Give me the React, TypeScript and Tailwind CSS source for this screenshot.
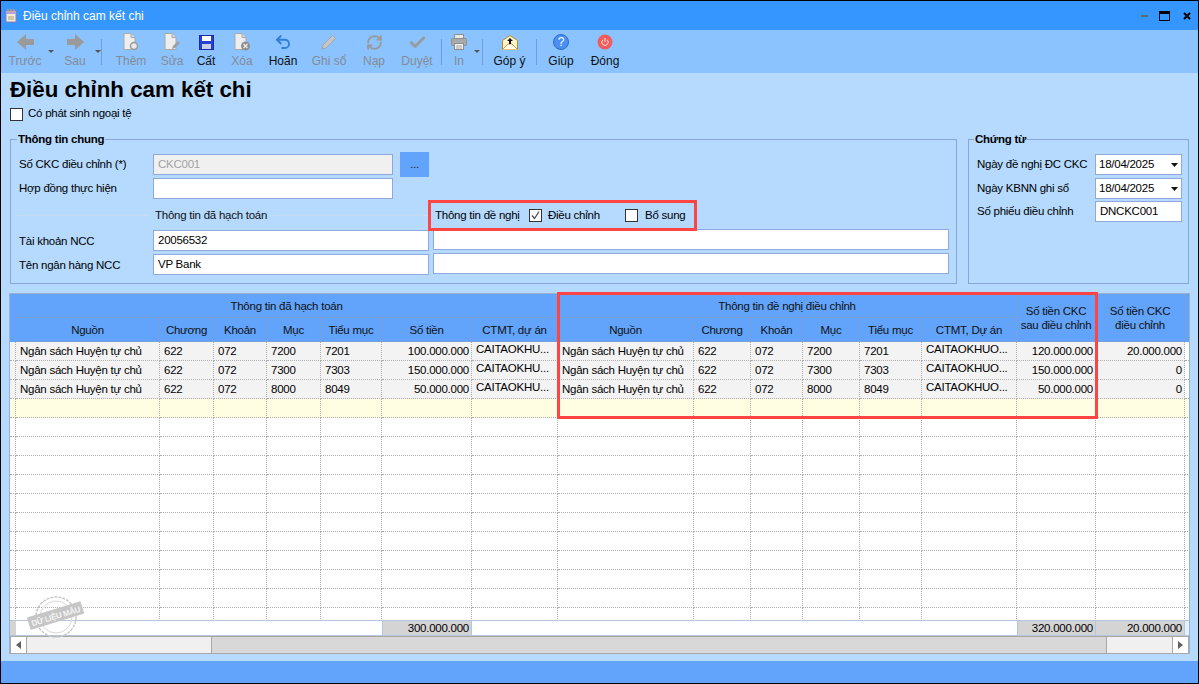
import type { ReactNode } from "react";
import { Undo2, RefreshCw, Check } from "lucide-react";

const gridCols =
  "grid grid-cols-[6px_144px_54px_53px_54px_61px_90px_86px_136px_57px_52px_57px_62px_95px_79px_89px_4px]";

const dataRows = [
  ["7200", "7201", "100.000.000", "120.000.000", "20.000.000"],
  ["7300", "7303", "150.000.000", "150.000.000", "0"],
  ["8000", "8049", "50.000.000", "50.000.000", "0"],
];

const emptyCols = Array.from({ length: 17 }, (_, i) => i);
const emptyRows = Array.from({ length: 11 }, (_, i) => i);

function ArrowIcon({ right }: { right?: boolean }) {
  return (
    <svg width="17" height="16" viewBox="0 0 17 16">
      <path
        d={right ? "M0 5h8V0l9 8-9 8v-5H0z" : "M17 5H9V0L0 8l9 8v-5h8z"}
        fill="#9a9a9a"
      />
    </svg>
  );
}

function DocIcon({ badge }: { badge: "add" | "edit" | "del" }) {
  return (
    <svg width="16" height="18" viewBox="0 0 16 18">
      <path d="M1 .5h7l4 4v12H1z" fill="#eeeeee" stroke="#a8a8a8" />
      <path d="M8 .5v4h4" fill="#d8d8d8" stroke="#a8a8a8" />
      {badge === "add" && (
        <circle cx="11" cy="13" r="3.5" fill="#e8e8e8" stroke="#9a9a9a" strokeWidth="1.5" />
      )}
      {badge === "edit" && <path d="M8 16l1-3 5-5 2 2-5 5z" fill="#9f9f9f" />}
      {badge === "del" && (
        <>
          <circle cx="11.500" cy="13" r="4.500" fill="#8f8f8f" />
          <path d="M9.500 11l4 4m0-4l-4 4" stroke="#eeeeee" strokeWidth="1.200" />
        </>
      )}
    </svg>
  );
}

function SaveIcon() {
  return (
    <svg width="15" height="15" viewBox="0 0 15 15">
      <rect x="0.500" y="0.500" width="14" height="14" fill="#2a3fd0" stroke="#1a2aa8" />
      <rect x="3" y="1" width="9" height="5" fill="#ffffff" />
      <rect x="3" y="9" width="9" height="5" fill="#c8d0e8" />
    </svg>
  );
}

function PencilIcon() {
  return (
    <svg width="16" height="16" viewBox="0 0 16 16">
      <path d="M1 15l1-4L11.500 1.500l3 3L5 14z" fill="#c6c6c6" stroke="#a5a5a5" />
    </svg>
  );
}

function PrinterIcon() {
  return (
    <svg width="16" height="16" viewBox="0 0 16 16">
      <rect x="3.500" y="0.500" width="9" height="4" fill="#e8e8e8" stroke="#8f8f8f" />
      <rect x="0.500" y="4.500" width="15" height="7" rx="1" fill="#a9a9a9" stroke="#8f8f8f" />
      <rect x="3.500" y="9.500" width="9" height="6" fill="#efefef" stroke="#8f8f8f" />
      <path d="M5 12h6M5 14h6" stroke="#a9a9a9" />
    </svg>
  );
}

function MailIcon() {
  return (
    <svg width="16" height="15" viewBox="0 0 16 15">
      <path d="M.5 5.500L8 .5l7.500 5v9H.5z" fill="#fff6d0" stroke="#c08a20" />
      <path d="M.5 14.500L6 9h4l5.500 5.500" fill="#fffdf2" stroke="#d0a040" />
      <path d="M8 3l3 3H9v3H7V6H5z" fill="#111111" />
    </svg>
  );
}

function HelpIcon() {
  return (
    <div className="w-4 h-4 rounded-full bg-[#4a90f0] border border-[#2f6cc8] flex items-center justify-center text-white text-[12px] leading-none">
      ?
    </div>
  );
}

function PowerIcon() {
  return (
    <svg width="16" height="16" viewBox="0 0 16 16">
      <circle cx="8" cy="8" r="7.500" fill="#f25c5c" />
      <path d="M5.800 5.800a3.200 3.200 0 1 0 4.400 0M8 4v4" fill="none" stroke="#ffe4e4" strokeWidth="1" />
    </svg>
  );
}

function Caret() {
  return (
    <svg width="6" height="3" viewBox="0 0 6 3" className="mt-[20px] shrink-0">
      <path d="M0 0h6L3 3z" fill="#555555" />
    </svg>
  );
}

function ToolSep() {
  return <div className="w-[1px] h-[26px] mt-[9px] bg-[#6f9ed6] shrink-0" />;
}

function ToolItem({
  label,
  width,
  active,
  children,
}: {
  label: string;
  width: string;
  active?: boolean;
  children: ReactNode;
}) {
  return (
    <div className={`${width} shrink-0 flex flex-col items-center`}>
      <div className="h-[18px] mt-[3px] flex items-center justify-center">{children}</div>
      <div className={`mt-[3px] leading-[14px] ${active ? "text-[#111]" : "text-[#858c94]"}`}>{label}</div>
    </div>
  );
}

function Toolbar() {
  return (
    <div className="h-[43px] bg-[#8AC3FF] flex pl-[3px]">
      <ToolItem label="Trước" width="w-[42px]">
        <ArrowIcon />
      </ToolItem>
      <div className="w-[9px] flex justify-center">
        <Caret />
      </div>
      <ToolItem label="Sau" width="w-[40px]">
        <ArrowIcon right />
      </ToolItem>
      <div className="w-[6px] flex justify-center">
        <Caret />
      </div>
      <ToolSep />
      <div className="w-[4px]" />
      <ToolItem label="Thêm" width="w-[50px]">
        <DocIcon badge="add" />
      </ToolItem>
      <ToolItem label="Sửa" width="w-[32px]">
        <DocIcon badge="edit" />
      </ToolItem>
      <ToolItem label="Cất" width="w-[36px]" active>
        <SaveIcon />
      </ToolItem>
      <ToolItem label="Xóa" width="w-[36px]">
        <DocIcon badge="del" />
      </ToolItem>
      <ToolItem label="Hoãn" width="w-[46px]" active>
        <Undo2 size={18} strokeWidth={2.500} className="text-[#2f7fd8]" />
      </ToolItem>
      <ToolItem label="Ghi sổ" width="w-[46px]">
        <PencilIcon />
      </ToolItem>
      <ToolItem label="Nạp" width="w-[44px]">
        <RefreshCw size={17} strokeWidth={2.600} className="text-[#9a9a9a]" />
      </ToolItem>
      <ToolItem label="Duyệt" width="w-[42px]">
        <Check size={19} strokeWidth={3.500} className="text-[#9a9a9a]" />
      </ToolItem>
      <div className="w-[3px]" />
      <ToolSep />
      <div className="w-[2px]" />
      <ToolItem label="In" width="w-[30px]">
        <PrinterIcon />
      </ToolItem>
      <div className="w-[6px] flex justify-center">
        <Caret />
      </div>
      <div className="w-[2px]" />
      <ToolSep />
      <ToolItem label="Góp ý" width="w-[53px]" active>
        <MailIcon />
      </ToolItem>
      <ToolSep />
      <ToolItem label="Giúp" width="w-[48px]" active>
        <HelpIcon />
      </ToolItem>
      <ToolItem label="Đóng" width="w-[40px]" active>
        <PowerIcon />
      </ToolItem>
    </div>
  );
}

function Checkbox({ checked }: { checked?: boolean }) {
  return (
    <div className="w-[13px] h-[13px] bg-white border border-[#333] flex items-center justify-center shrink-0">
      {checked && (
        <svg width="11" height="11" viewBox="0 0 11 11">
          <path d="M2 5.500l2.500 3L9 1.500" fill="none" stroke="#444" strokeWidth="1.200" />
        </svg>
      )}
    </div>
  );
}

function Field({ className, value, disabled }: { className: string; value?: string; disabled?: boolean }) {
  return (
    <div
      className={`${className} border border-[#8FA8E0] pl-[4px] leading-[19px] ${
        disabled ? "bg-[#f0f0f0] text-[#a2a2a2]" : "bg-white"
      }`}
    >
      {value}
    </div>
  );
}

function DateField({ value }: { value: string }) {
  return (
    <div className="w-[87px] h-[21px] bg-white border border-[#8FA8E0] pl-[3px] leading-[19px] flex justify-between items-center pr-[3px]">
      <span>{value}</span>
      <svg width="7" height="4" viewBox="0 0 7 4">
        <path d="M0 0h7L3.500 4z" fill="#111111" />
      </svg>
    </div>
  );
}

function GeneralBox() {
  return (
    <fieldset className="w-[947px] h-[152px] border border-[#8AA5DC] pl-[8px] pt-[8px]">
      <legend className="-ml-[2px] px-[1px] font-bold leading-[14px]">Thông tin chung</legend>
      <div className="flex items-center h-[21px]">
        <div className="w-[134px]">Số CKC điều chỉnh (*)</div>
        <Field className="w-[240px] h-[21px]" value="CKC001" disabled />
        <div className="ml-[7px] w-[29px] h-[25px] bg-[#62A4FB] flex items-center justify-center text-[#222] leading-[25px]">
          ...
        </div>
      </div>
      <div className="flex items-center h-[21px] mt-[3px]">
        <div className="w-[134px]">Hợp đồng thực hiện</div>
        <Field className="w-[240px] h-[21px]" />
      </div>
      <div className="flex items-center h-[31px] mt-[1px] -ml-[2px] relative z-10">
        <div className="w-[133px] h-[1px] bg-[#c8dcef]" />
        <div className="ml-[5px] w-[118px] text-[#111]">Thông tin đã hạch toán</div>
        <div className="w-[155px] h-[1px] bg-[#c8dcef]" />
        <div className="w-[269px] h-[31px] border-[3px] border-[#FF4444] flex items-center pl-[4px]">
          <span className="w-[94px]">Thông tin đề nghị</span>
          <Checkbox checked />
          <span className="ml-[6px] w-[77px]">Điều chỉnh</span>
          <Checkbox />
          <span className="ml-[7px]">Bổ sung</span>
        </div>
      </div>
      <div className="flex items-start -mt-[2px]">
        <div className="w-[134px] mt-[4px]">Tài khoản NCC</div>
        <Field className="w-[276px] h-[21px] mt-[1px]" value="20056532" />
        <Field className="ml-[4px] w-[516px] h-[21px]" />
      </div>
      <div className="flex items-start mt-[2px]">
        <div className="w-[134px] mt-[4px]">Tên ngân hàng NCC</div>
        <Field className="w-[276px] h-[21px] mt-[1px]" value="VP Bank" />
        <Field className="ml-[4px] w-[516px] h-[21px]" />
      </div>
    </fieldset>
  );
}

function VoucherBox() {
  return (
    <fieldset className="ml-[11px] w-[221px] h-[152px] border border-[#8AA5DC] pl-[8px] pt-[8px]">
      <legend className="-ml-[3px] px-[1px] font-bold leading-[14px]">Chứng từ</legend>
      <div className="flex items-center h-[21px]">
        <div className="w-[118px] whitespace-nowrap">Ngày đề nghị ĐC CKC</div>
        <DateField value="18/04/2025" />
      </div>
      <div className="flex items-center h-[21px] mt-[3px]">
        <div className="w-[118px]">Ngày KBNN ghi sổ</div>
        <DateField value="18/04/2025" />
      </div>
      <div className="flex items-center h-[21px] mt-[2px]">
        <div className="w-[118px]">Số phiếu điều chỉnh</div>
        <Field className="w-[87px] h-[21px]" value="DNCKC001" />
      </div>
    </fieldset>
  );
}

function HeadCell({ children, className = "" }: { children?: ReactNode; className?: string }) {
  return (
    <div
      className={`flex items-center justify-center text-center border-r border-b border-dotted border-[#8c9fb8] leading-[14px] text-[#111] ${className}`}
    >
      {children}
    </div>
  );
}

function Cell({ children, right, top }: { children?: ReactNode; right?: boolean; top?: boolean }) {
  return (
    <div
      className={`h-[19px] border-r border-b border-dotted border-[#adadad] whitespace-nowrap overflow-hidden ${
        right ? "text-right pr-[2px]" : "pl-[4px]"
      } ${top ? "leading-[15px]" : "leading-[18px]"}`}
    >
      {children}
    </div>
  );
}

function DataRow({ muc, tieuMuc, money, after, diff }: { muc: string; tieuMuc: string; money: string; after: string; diff: string }) {
  return (
    <div className={`${gridCols} bg-[#f3f3f3]`}>
      <Cell />
      <Cell>Ngân sách Huyện tự chủ</Cell>
      <Cell>622</Cell>
      <Cell>072</Cell>
      <Cell>{muc}</Cell>
      <Cell>{tieuMuc}</Cell>
      <Cell right>{money}</Cell>
      <Cell top>CAITAOKHU...</Cell>
      <Cell>Ngân sách Huyện tự chủ</Cell>
      <Cell>622</Cell>
      <Cell>072</Cell>
      <Cell>{muc}</Cell>
      <Cell>{tieuMuc}</Cell>
      <Cell top>CAITAOKHUO...</Cell>
      <Cell right>{after}</Cell>
      <Cell right>{diff}</Cell>
      <div className="bg-white border-b border-dotted border-[#adadad]" />
    </div>
  );
}

function Stamp() {
  return (
    <svg width="60" height="48" viewBox="0 0 60 48" className="absolute left-[17px] top-[300px] pointer-events-none">
      <circle cx="29" cy="23" r="20" fill="none" stroke="#c9c9c9" strokeWidth="1.500" strokeDasharray="3 1" />
      <circle cx="29" cy="23" r="16" fill="none" stroke="#d8d8d8" strokeWidth="1" />
      <g transform="rotate(-17 29 23)">
        <rect x="1" y="15" width="56" height="13" fill="#c6c6c6" />
        <text x="29" y="25" textAnchor="middle" fontSize="8" fontWeight="bold" fill="#f4f4f4" fontFamily="Liberation Sans, sans-serif">
          DỮ LIỆU MẪU
        </text>
      </g>
    </svg>
  );
}

function DataGrid() {
  return (
    <div className="relative -ml-[1px] w-[1181px] h-[361px] border border-[#9bb0d0] border-b-[#a8a8a8] bg-white">
      <div className={`${gridCols} grid-rows-[24px_24px] bg-[#62A4FB]`}>
        <div className="row-span-2" />
        <HeadCell className="col-span-7">Thông tin đã hạch toán</HeadCell>
        <HeadCell className="col-span-6">Thông tin đề nghị điều chỉnh</HeadCell>
        <HeadCell className="row-span-2">
          Số tiền CKC
          <br />
          sau điều chỉnh
        </HeadCell>
        <HeadCell className="row-span-2">
          Số tiền CKC
          <br />
          điều chỉnh
        </HeadCell>
        <div className="row-span-2" />
        <HeadCell>Nguồn</HeadCell>
        <HeadCell>Chương</HeadCell>
        <HeadCell>Khoản</HeadCell>
        <HeadCell>Mục</HeadCell>
        <HeadCell>Tiểu mục</HeadCell>
        <HeadCell>Số tiền</HeadCell>
        <HeadCell>CTMT, dự án</HeadCell>
        <HeadCell>Nguồn</HeadCell>
        <HeadCell>Chương</HeadCell>
        <HeadCell>Khoản</HeadCell>
        <HeadCell>Mục</HeadCell>
        <HeadCell>Tiểu mục</HeadCell>
        <HeadCell>CTMT, Dự án</HeadCell>
      </div>

      <div className="h-[278px] overflow-hidden">
        {dataRows.map((r) => (
          <DataRow key={r[0]} muc={r[0]} tieuMuc={r[1]} money={r[2]} after={r[3]} diff={r[4]} />
        ))}
        <div className={`${gridCols} bg-[#FFFEE3]`}>
          {emptyCols.map((c) => (
            <Cell key={c} />
          ))}
        </div>
        {emptyRows.map((r) => (
          <div key={r} className={gridCols}>
            {emptyCols.map((c) => (
              <Cell key={c} />
            ))}
          </div>
        ))}
      </div>

      <div className={`${gridCols} h-[16px] border-t border-b border-[#b5c6da] leading-[14px]`}>
        <div className="bg-[#d4d4d4]" />
        <div className="col-span-5" />
        <div className="bg-[#d4d4d4] border-x border-[#b5c6da] text-right pr-[2px]">300.000.000</div>
        <div className="col-span-7" />
        <div className="bg-[#d4d4d4] border-x border-[#b5c6da] text-right pr-[2px]">320.000.000</div>
        <div className="bg-[#d4d4d4] border-r border-[#b5c6da] text-right pr-[2px]">20.000.000</div>
        <div className="bg-[#e3f0fd]" />
      </div>

      <div className="h-[17px] flex bg-[#f0f0f0] border-t border-[#a8a8a8]">
        <div className="w-[17px] bg-white border-x border-[#a8a8a8] flex items-center justify-center">
          <svg width="5" height="8" viewBox="0 0 5 8">
            <path d="M5 0v8L0 4z" fill="#606060" />
          </svg>
        </div>
        <div className="w-[184px]" />
        <div className="flex-1 bg-[#d8d8d8] border-x border-[#a8a8a8]" />
        <div className="w-[65px]" />
        <div className="w-[17px] bg-white border-x border-[#a8a8a8] flex items-center justify-center">
          <svg width="5" height="8" viewBox="0 0 5 8">
            <path d="M0 0v8l5-4z" fill="#606060" />
          </svg>
        </div>
      </div>

      <Stamp />
      <div className="absolute left-[547px] -top-[2px] w-[541px] h-[127px] border-[3px] border-[#FF4444] pointer-events-none" />
    </div>
  );
}

export default function App() {
  return (
    <div className="w-[1199px] h-[684px] overflow-hidden border border-black flex flex-col bg-[#B5DAFE] text-[12px] text-black font-['Liberation_Sans',sans-serif]">
      <div className="h-[29px] shrink-0 bg-[#3596FF] flex items-center pl-[4px] pr-[7px] text-white">
        <svg width="12" height="14" viewBox="0 0 12 14" className="shrink-0">
          <rect x="1" y="2" width="10" height="11" fill="#f2ecd8" stroke="#8d7fb0" />
          <rect x="1" y="2" width="10" height="3" fill="#b9a2d8" />
          <path d="M3 0v3M6 0v3M9 0v3" stroke="#e0b050" />
          <path d="M3 8h6M3 10h6" stroke="#b0a080" />
        </svg>
        <div className="ml-[6px] flex-1">Điều chỉnh cam kết chi</div>
        <div className="w-[7px] h-[2px] bg-[#5f6770]" />
        <div className="ml-[11px] w-[11px] h-[10px] border border-black border-t-[3px]" />
        <svg width="8" height="8" viewBox="0 0 8 8" className="ml-[13px]">
          <path d="M1 1l6 6m0-6l-6 6" stroke="#000000" strokeWidth="2" />
        </svg>
      </div>

      <Toolbar />

      <div className="flex-1 min-h-0 pl-[9px] flex flex-col text-[11.5px] tracking-[-0.25px]">
        <div className="text-[22.3px] tracking-normal font-bold leading-[24px] mt-[5px]">Điều chỉnh cam kết chi</div>
        <div className="flex items-center mt-[5px] h-[14px]">
          <Checkbox />
          <span className="ml-[5px]">Có phát sinh ngoại tệ</span>
        </div>
        <div className="flex mt-[11px]">
          <GeneralBox />
          <VoucherBox />
        </div>
        <div className="mt-[9px]">
          <DataGrid />
        </div>
      </div>

      <div className="h-[22px] shrink-0 bg-[#62A4FB]" />
    </div>
  );
}
